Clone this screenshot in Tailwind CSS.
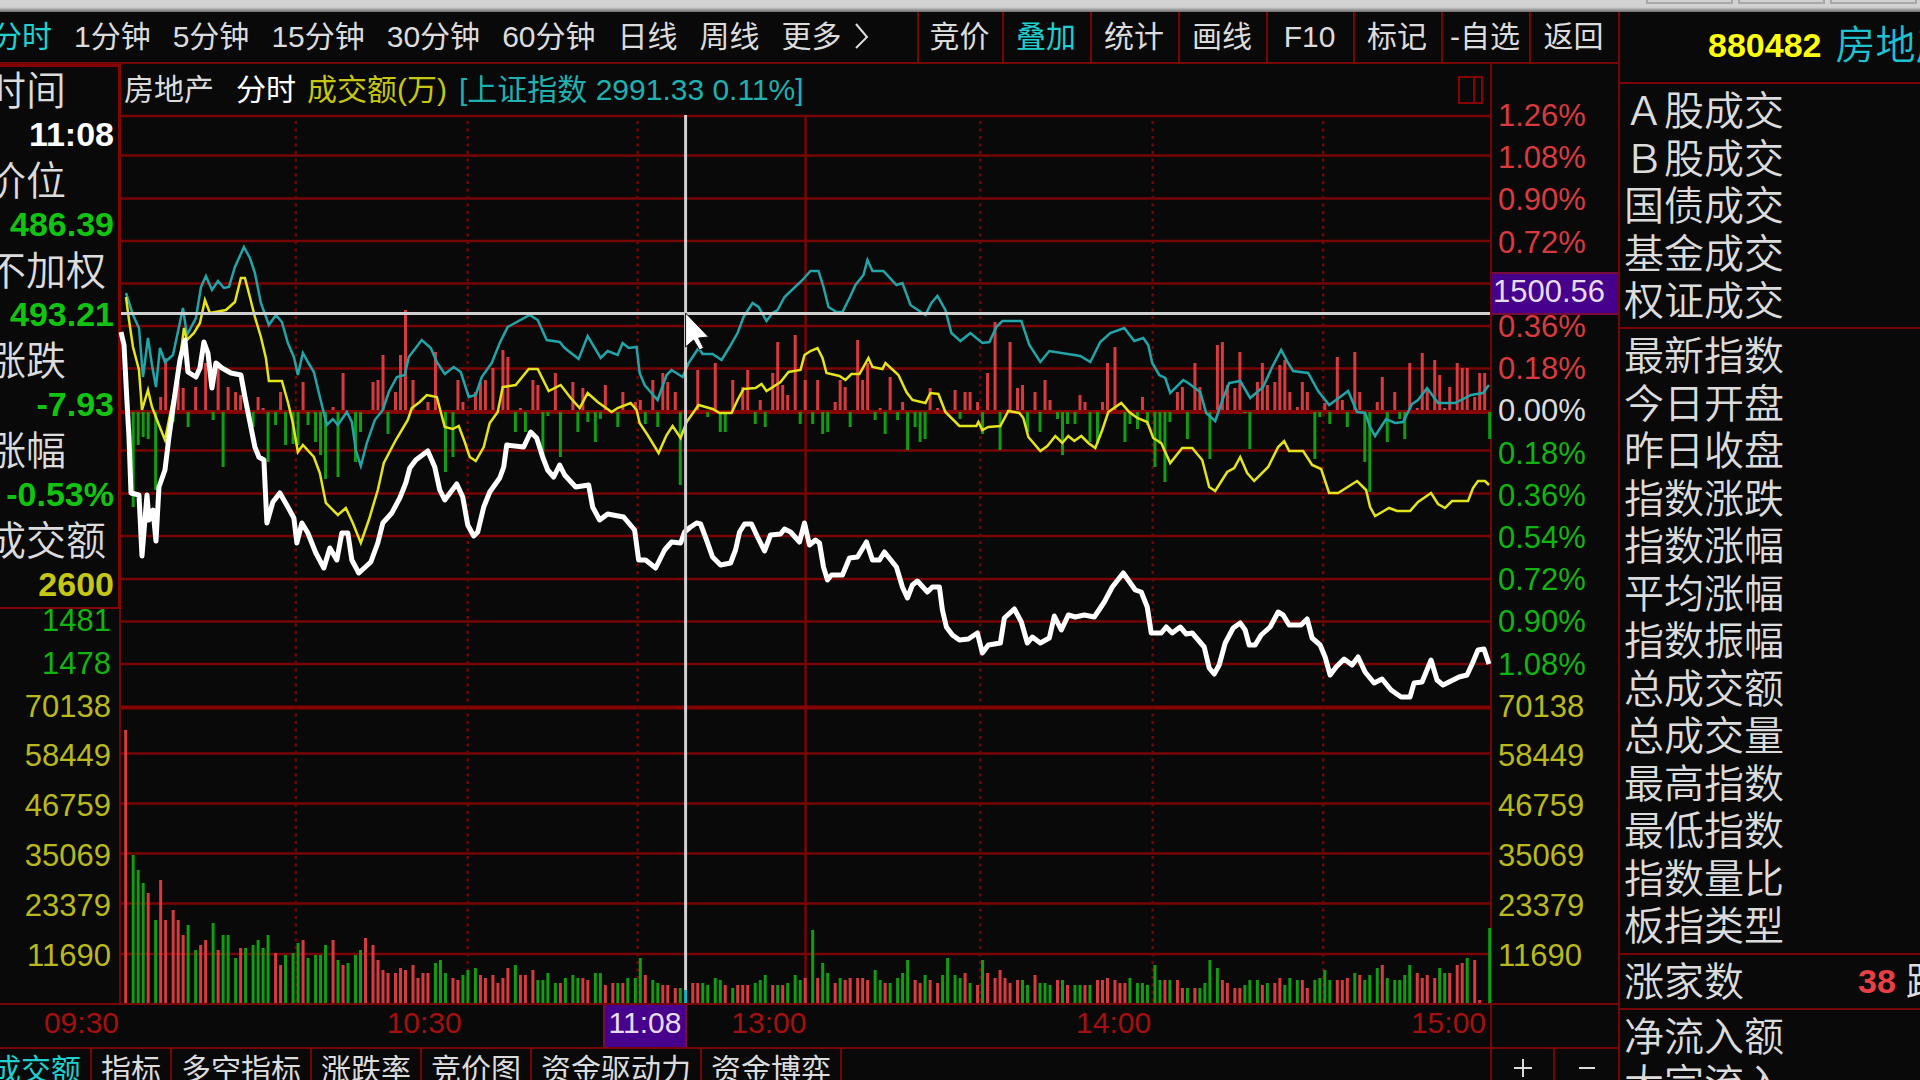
<!DOCTYPE html>
<html lang="zh-CN">
<head>
<meta charset="utf-8">
<meta name="viewport" content="width=device-width, initial-scale=1">
<title>房地产 880482 分时</title>
<script src="https://cdn.jsdelivr.net/npm/@tailwindcss/browser@4"></script>
</head>
<body class="flex h-screen flex-col overflow-hidden bg-[#090909] font-['Liberation_Sans','Noto_Sans_CJK_SC',sans-serif] text-[#dcdcdc]">

<!-- window frame -->
<div class="flex h-3 shrink-0 justify-end gap-[5px] bg-linear-to-b from-[#d2d2d2] from-60% to-[#6e6e6e] pr-[3px]">
  <div class="h-1 w-[87px] border-x-2 border-b-2 border-[#a8a8a8]"></div>
  <div class="h-1 w-[87px] border-x-2 border-b-2 border-[#a8a8a8]"></div>
  <div class="h-1 w-[87px] border-x-2 border-b-2 border-[#a8a8a8]"></div>
</div>

<div class="flex min-h-0 flex-1">
  <main class="flex min-w-0 flex-1 flex-col">

    <!-- period toolbar -->
    <div class="flex h-[52px] shrink-0 border-b-2 border-[#780505] text-[30px] leading-[50px] whitespace-nowrap">
      <nav class="-ml-2 flex flex-1 gap-[22px]">
        <button class="text-[#1fd0d0]">分时</button>
        <button>1分钟</button>
        <button>5分钟</button>
        <button>15分钟</button>
        <button>30分钟</button>
        <button>60分钟</button>
        <button>日线</button>
        <button>周线</button>
        <button class="flex items-center gap-3">更多
          <svg class="h-8 w-4" viewBox="0 0 16 32" fill="none" stroke="#dcdcdc" stroke-width="2"><path d="M2 3L13 16L2 27"/></svg>
        </button>
      </nav>
      <button class="w-[85px] border-l-2 border-[#780505] pr-0.5">竞价</button>
      <button class="w-[88px] border-l-2 border-[#780505] pr-0.5 text-[#1fd0d0]">叠加</button>
      <button class="w-[88px] border-l-2 border-[#780505] pr-0.5">统计</button>
      <button class="w-[88px] border-l-2 border-[#780505] pr-0.5">画线</button>
      <button class="w-[87px] border-l-2 border-[#780505] pr-0.5">F10</button>
      <button class="w-[88px] border-l-2 border-[#780505] pr-0.5">标记</button>
      <button class="w-[88px] border-l-2 border-[#780505] pr-0.5">-自选</button>
      <button class="w-[89px] border-l-2 border-[#780505] pr-0.5">返回</button>
    </div>

    <div class="flex h-[941px] shrink-0 border-b-2 border-[#780505]">
      <!-- values under the crosshair -->
      <div class="flex w-[121px] shrink-0 flex-col">
        <dl class="h-[545px] overflow-hidden border-t-[3px] border-r-[3px] border-b-2 border-[#860303] pt-0.5 pr-1 text-[40px] leading-[45px] font-[350] whitespace-nowrap [&_dd]:pb-1 [&_dd]:text-right [&_dd]:text-[34px] [&_dd]:leading-[41px] [&_dd]:font-bold [&_dt]:-ml-3.5">
          <dt>时间</dt><dd class="text-white">11:08</dd>
          <dt>价位</dt><dd class="text-[#12c412]">486.39</dd>
          <dt>不加权</dt><dd class="text-[#12c412]">493.21</dd>
          <dt>涨跌</dt><dd class="text-[#12c412]">-7.93</dd>
          <dt>涨幅</dt><dd class="text-[#12c412]">-0.53%</dd>
          <dt>成交额</dt><dd class="text-[#c6c614]">2600</dd>
        </dl>
        <div class="flex flex-1 flex-col border-r-2 border-[#780505] pr-2 text-right text-[31px] leading-6">
          <div class="flex h-[110px] flex-col justify-between">
            <span class="text-[#12b412]">1481</span><span class="text-[#12b412]">1478</span><span class="text-[#b9b91e]">70138</span>
          </div>
          <div class="mt-[25px] flex h-[224px] flex-col justify-between text-[#b9b91e]">
            <span>58449</span><span>46759</span><span>35069</span><span>23379</span><span>11690</span>
          </div>
        </div>
      </div>

      <!-- plot -->
      <div class="relative z-10 min-w-0 flex-1">
        <div class="flex h-[51px] items-center pr-[7px] pl-[3px] text-[30px] leading-[50px] whitespace-nowrap">
          <span>房地产</span>
          <span class="ml-[22px] text-white">分时</span>
          <span class="ml-[11px] text-[#c6c614]">成交额(万)</span>
          <span class="ml-3 text-[#1fb0b0]">[上证指数 2991.33 0.11%]</span>
          <svg class="ml-auto h-7 w-[25px]" viewBox="0 0 25 28" fill="none" stroke="#860303" stroke-width="2"><path d="M1 1H24V27H1ZM16 1V27"/></svg>
        </div>
        <svg class="block h-[888px] w-full overflow-visible" viewBox="121 115 1370 888" preserveAspectRatio="none" fill="none" role="img" aria-label="房地产分时走势">
          <path stroke="#780505" stroke-width="2.5" d="M121 116H1491M121 155.500H1491M121 198.500H1491M121 241H1491M121 283.500H1491M121 326H1491M121 368.500H1491M121 450.500H1491M121 493.500H1491M121 536H1491M121 579H1491M121 621.500H1491M121 664H1491M121 753.500H1491M121 803.500H1491M121 853.500H1491M121 903.500H1491M121 954H1491M806 116V1003"/>
          <path stroke="#860303" stroke-width="4" d="M121 412H1491M121 707.500H1491"/>
          <path stroke="#6e0606" stroke-width="2.5" stroke-dasharray="3 4.500" d="M296 121V1003M468 121V1003M638 121V1003M981 121V1003M1153.500 121V1003M1324 121V1003"/>
          <path id="up" stroke="#d83a3e" stroke-width="3"/>
          <path id="down" stroke="#119c11" stroke-width="3"/>
          <path stroke="#21a5a8" stroke-width="2.5" d="M126 293L133 315 139 328 143 377 148 338 152 365 156 387 160 348 165 362 173 355 179 327 183 308 187 335 196 318 201 287 206 276 212 290 218 281 224 288 229 287 235 267 244 247 250 258 255 273 261 303 269 325 276 315 282 322 288 343 294 357 298 375 303 353 308 362 314 372 320 397 327 425 333 419 338 425 347 412 352 422 356 450 361 466 367 443 375 420 383 410 389 392 397 377 405 375 409 357 422 340 431 348 437 362 445 374 454 367 461 372 469 397 476 395 482 377 492 363 500 343 508 327 530 315 538 320 547 340 560 342 565 348 579 359 588 336 601 358 608 351 618 355 623 343 629 348 637 347 640 373 645 385 658 400 667 375 672 370 683 377 689 363 693 357 699 348 703 354 713 354 722 360 730 347 738 333 744 317 753 303 759 307 767 321 773 313 778 310 785 297 803 280 811 271 819 271 824 287 829 307 837 312 843 312 850 298 856 285 864 275 868 260 873 271 884 271 897 285 903 283 911 305 926 315 932 303 938 296 946 310 952 333 961 341 971 333 983 343 990 342 997 327 1003 321 1022 321 1030 345 1041 362 1050 351 1081 356 1091 362 1101 342 1111 333 1125 328 1135 341 1144 338 1149 345 1153 363 1160 375 1166 378 1171 393 1184 380 1189 383 1201 392 1207 413 1216 421 1224 398 1230 383 1241 381 1251 398 1264 387 1273 367 1282 350 1289 363 1294 371 1309 373 1319 391 1330 405 1341 397 1349 391 1358 412 1366 413 1371 427 1376 436 1387 419 1396 423 1404 422 1413 404 1419 400 1428 388 1439 403 1456 403 1472 395 1484 393 1490 385"/>
          <path stroke="#e4e41c" stroke-width="2.5" d="M126 297L129 320 133 347 139 370 142 410 148 390 152 407 159 425 165 440 169 420 175 390 180 360 184 328 187 340 194 333 200 323 205 300 210 313 226 310 235 302 241 278 245 278 250 297 255 317 261 337 266 358 269 381 282 381 288 402 293 423 298 452 303 445 314 457 320 473 326 503 338 515 346 508 353 523 361 543 369 520 378 490 384 463 396 440 408 420 412 408 420 402 427 395 437 397 445 427 453 429 459 426 465 442 470 457 476 461 484 447 490 423 498 412 503 387 516 385 529 369 538 369 549 391 561 385 571 398 580 408 588 393 598 402 612 412 618 408 631 403 637 410 640 423 648 435 659 453 667 435 673 426 681 438 687 422 699 405 713 409 720 413 732 413 738 400 744 389 756 388 762 384 767 391 781 382 789 372 801 370 805 355 811 351 818 348 823 358 827 373 840 376 846 380 852 374 860 374 869 358 873 367 883 369 886 363 899 375 907 392 913 400 926 403 931 393 939 394 946 412 960 426 977 426 979 422 983 430 989 427 1001 426 1009 411 1020 413 1024 418 1029 437 1041 451 1048 446 1056 436 1063 443 1069 436 1075 441 1082 436 1089 443 1096 448 1103 430 1109 412 1122 403 1130 412 1138 418 1148 422 1154 438 1162 443 1171 463 1183 448 1193 448 1203 460 1210 487 1216 491 1228 472 1235 468 1241 457 1248 473 1255 481 1269 467 1279 447 1285 441 1290 451 1304 451 1313 465 1322 469 1330 493 1339 493 1358 481 1367 490 1371 507 1376 516 1390 508 1398 511 1411 511 1419 502 1432 493 1439 504 1446 508 1453 501 1469 501 1474 488 1479 481 1486 481 1490 485"/>
          <path stroke="#ffffff" stroke-width="5" stroke-linejoin="round" d="M121 332L124 345 127 402 129 437 131 493 139 495 142 556 147 495 149 520 153 510 156 541 159 487 165 470 169 437 176 387 180 360 185 340 188 372 196 377 200 368 204 342 208 353 212 388 216 363 222 368 231 373 241 375 245 397 249 417 255 447 259 457 264 460 267 523 273 502 280 493 288 507 294 518 297 543 302 523 308 533 316 553 324 568 330 548 337 560 342 533 348 533 352 560 359 573 371 562 378 543 383 523 392 513 400 498 406 483 410 468 416 460 428 451 435 467 440 490 445 500 451 492 457 484 463 497 468 525 474 536 478 532 484 507 490 492 500 478 504 467 507 445 524 447 531 432 537 438 543 457 548 470 554 477 560 465 565 475 576 487 589 485 593 507 600 520 608 514 624 517 635 530 639 560 646 560 656 568 665 550 672 542 681 543 685 532 691 527 697 523 701 524 707 540 713 557 721 565 731 563 736 550 740 532 745 524 752 524 758 537 765 551 771 535 781 534 785 529 791 532 800 542 805 523 810 545 816 540 820 543 824 567 828 580 832 575 843 575 850 558 858 557 867 542 873 560 880 560 885 552 897 567 903 587 908 598 913 585 918 581 928 592 933 587 940 587 943 610 947 627 953 635 960 640 969 639 978 633 983 653 989 645 1001 643 1005 618 1015 609 1022 622 1028 643 1033 637 1041 643 1050 638 1055 616 1062 630 1069 615 1076 617 1085 615 1095 617 1105 602 1113 587 1124 573 1136 590 1142 592 1148 607 1152 633 1162 633 1167 627 1173 633 1181 627 1187 634 1193 633 1205 647 1210 668 1215 674 1220 665 1226 643 1234 628 1241 623 1246 630 1250 645 1256 645 1262 635 1271 627 1279 612 1284 615 1290 625 1302 625 1308 619 1313 638 1321 645 1326 657 1331 675 1337 667 1345 659 1353 665 1359 657 1366 672 1375 683 1383 679 1392 690 1402 697 1411 697 1415 683 1423 682 1432 660 1438 680 1444 685 1460 677 1468 675 1474 662 1479 650 1485 649 1490 664"/>
          <path stroke="#d0d0d0" stroke-width="3" d="M121 313.500H1491M686 115V990"/>
          <path stroke="#12b4c8" stroke-width="3" d="M686 990V1003"/>
          <path fill="#ffffff" stroke="#111111" stroke-width="1" d="M686 313V347L694 340L700 350L704 348L699 338L709 337Z"/>
        </svg>
      </div>

      <!-- right axis -->
      <div class="relative w-[128px] shrink-0 border-l-2 border-[#780505] pt-10 pl-1.5 text-[31px] leading-6">
        <div class="flex h-[615px] flex-col justify-between text-[#12b412]">
          <span class="text-[#d83a3e]">1.26%</span><span class="text-[#d83a3e]">1.08%</span><span class="text-[#d83a3e]">0.90%</span><span class="text-[#d83a3e]">0.72%</span><span class="h-6"></span><span class="text-[#d83a3e]">0.36%</span><span class="text-[#d83a3e]">0.18%</span><span class="text-[#dcdcdc]">0.00%</span><span>0.18%</span><span>0.36%</span><span>0.54%</span><span>0.72%</span><span>0.90%</span><span>1.08%</span><span class="text-[#b9b91e]">70138</span>
        </div>
        <div class="mt-[25px] flex h-[224px] flex-col justify-between text-[#b9b91e]">
          <span>58449</span><span>46759</span><span>35069</span><span>23379</span><span>11690</span>
        </div>
        <div class="absolute top-[208px] right-0 left-0 h-[43px] border-y-2 border-[#780a3c] bg-[#46008c] pl-px leading-9 text-[#e6dcf0]">1500.56</div>
      </div>
    </div>

    <!-- time axis -->
    <div class="relative flex h-11 shrink-0 border-b-2 border-[#780505] text-right text-[30px] leading-9 text-[#a50f0f]">
      <span class="w-[121px] pr-0.5">09:30</span>
      <span class="flex-[345] pr-1">10:30</span>
      <span class="flex-[345] pr-1">13:00</span>
      <span class="flex-[345] pr-1">14:00</span>
      <span class="flex-[335] pr-1">15:00</span>
      <span class="w-[128px] border-l-2 border-[#780505]"></span>
      <span class="absolute top-0 left-[603px] h-[42px] w-[84px] border-x-2 border-[#780a3c] bg-[#46008c] text-center text-[#e6dcf0]">11:08</span>
    </div>

    <!-- indicator tabs -->
    <div class="flex min-h-0 flex-1 overflow-hidden text-[30px] leading-[42px] whitespace-nowrap">
      <div class="-ml-[18px] flex flex-1 items-start">
        <button class="border-r-2 border-[#780505] px-[9px] text-[#1fd0d0]">成交额</button>
        <button class="border-r-2 border-[#780505] px-[9px]">指标</button>
        <button class="border-r-2 border-[#780505] px-[9px]">多空指标</button>
        <button class="border-r-2 border-[#780505] px-[9px]">涨跌率</button>
        <button class="border-r-2 border-[#780505] px-[9px]">竞价图</button>
        <button class="border-r-2 border-[#780505] px-[9px]">资金驱动力</button>
        <button class="border-r-2 border-[#780505] px-[9px]">资金博弈</button>
      </div>
      <button class="flex w-[63px] justify-center border-l-2 border-[#780505] pt-2.5" aria-label="放大"><svg class="h-[18px] w-[18px]" viewBox="0 0 18 18" stroke="#dcdcdc" stroke-width="2"><path d="M0 9H18M9 0V18"/></svg></button>
      <button class="flex w-[65px] justify-center border-l-2 border-[#780505] pt-2.5" aria-label="缩小"><svg class="h-[18px] w-[18px]" viewBox="0 0 18 18" stroke="#dcdcdc" stroke-width="2"><path d="M1 9H17"/></svg></button>
    </div>
  </main>

  <!-- quote panel -->
  <aside class="w-[302px] shrink-0 overflow-hidden border-l-2 border-[#780505] text-[40px] font-[350] whitespace-nowrap">
    <h1 class="flex h-[72px] items-center border-b-2 border-[#780505] pb-1 pl-[88px]">
      <span class="text-[34px] font-bold text-[#ffff10]">880482</span>
      <span class="ml-3.5 text-[#1fc0d0]">房地产</span>
    </h1>
    <ul class="grid h-[245px] auto-rows-fr border-b-2 border-[#780505] pt-1 pb-px pl-1 leading-[47px]">
      <li>Ａ股成交</li><li>Ｂ股成交</li><li>国债成交</li><li>基金成交</li><li>权证成交</li>
    </ul>
    <ul class="grid h-[626px] auto-rows-fr border-b-2 border-[#780505] pt-1 pb-0.5 pl-1 leading-[47px]">
      <li>最新指数</li><li>今日开盘</li><li>昨日收盘</li><li>指数涨跌</li><li>指数涨幅</li><li>平均涨幅</li><li>指数振幅</li><li>总成交额</li><li>总成交量</li><li>最高指数</li><li>最低指数</li><li>指数量比</li><li>板指类型</li>
    </ul>
    <div class="flex h-[55px] items-center border-b-2 border-[#780505] pl-1">
      <span>涨家数</span>
      <span class="ml-[114px] text-[34px] font-bold text-[#e84045]">38</span>
      <span class="ml-2.5">跌家数</span>
    </div>
    <ul class="pt-1 pl-1 leading-[47px]">
      <li>净流入额</li><li>大宗流入</li>
    </ul>
  </aside>
</div>

<script>
  // One entry per trading minute: positive bars are red, negative bars are green.
  const volume = [273,-148,-133,-120,110,-83,123,83,93,83,68,-78,-53,58,63,-80,53,-68,-68,-45,55,-55,-58,-63,-55,-68,50,38,-48,-50,-60,63,-45,-48,-48,-58,63,-43,38,-40,-48,-53,65,58,43,33,30,30,35,33,38,25,30,30,-40,-43,-30,25,23,-28,-33,-35,28,25,28,20,25,35,-38,28,28,33,-23,-23,-30,-20,20,-25,-28,-25,25,23,-30,-30,18,20,-20,20,-25,-25,
    -45,28,-23,-20,18,18,15,-15,0,20,20,-20,-18,-25,-23,18,-15,18,18,18,-20,-23,-28,18,-18,18,-20,-28,-23,25,-73,25,-40,-30,20,-25,23,25,25,25,23,-33,-23,20,-20,-25,-30,-43,23,20,-28,23,20,-28,-45,-28,-25,30,-20,18,-43,30,25,33,25,20,23,-23,-18,28,-20,-20,-18,23,-23,18,-18,-18,18,-18,23,23,25,23,20,20,-25,-20,-20,-18,
    -38,-23,23,-23,23,15,-15,15,-15,-20,-43,-35,23,20,15,15,-18,-23,-23,18,-20,20,25,-18,-25,-23,23,15,-23,-25,-33,-23,23,23,25,-30,28,-23,-28,-35,38,-25,-23,-23,-28,-38,30,25,28,25,-35,-30,30,38,40,-45,43,3,0,-75];
  const strength = [0,-95,-33,-25,-27,-78,13,52,-10,28,22,-15,23,0,47,-8,47,-55,23,18,15,0,-15,13,2,-50,-13,18,-33,-32,-33,28,-13,-30,-43,-67,3,-65,37,0,-50,-20,0,28,30,55,-22,18,55,100,30,0,0,8,58,0,-60,-45,30,8,0,18,28,30,42,0,60,53,-20,2,-20,30,25,-45,-4,37,-45,0,28,-20,22,-10,-30,-7,25,0,-15,18,0,8,
    10,-12,30,-15,37,28,18,-73,0,0,40,0,-5,47,-20,-20,30,0,23,40,-12,10,-15,37,68,25,15,75,-12,30,-12,30,-22,-20,8,30,23,-15,70,30,47,-8,2,-22,33,-8,8,-38,-15,-30,-27,22,2,0,0,20,-7,18,18,8,-22,37,88,-38,0,68,22,25,-20,18,-20,30,10,-7,-43,-12,-12,15,8,-30,-32,8,47,63,0,-30,-12,-17,13,-13,
    -55,-32,-70,-10,18,23,-27,47,23,0,-47,65,68,25,22,58,-1,-37,28,47,25,28,45,50,18,3,28,18,-47,-5,7,-12,53,10,-15,58,18,-50,-80,8,33,-30,18,-7,-27,47,2,57,20,50,35,2,23,47,42,42,13,37,37,-27];
  const x = i => 125.7 + 2.5 * Math.round(2.285 * i + 0.3);
  let up = '', down = '';
  volume.forEach((v, i) => {
    const d = `M${x(i)} 1003v${-Math.abs(v)}`;
    if (v > 0) up += d; else if (v < 0) down += d;
  });
  strength.forEach((v, i) => {
    if (v > 0) up += `M${x(i)} 410v${-v}`;
    else if (v < 0) down += `M${x(i)} 412v${-v}`;
  });
  document.getElementById('up').setAttribute('d', up);
  document.getElementById('down').setAttribute('d', down);
</script>
</body>
</html>
